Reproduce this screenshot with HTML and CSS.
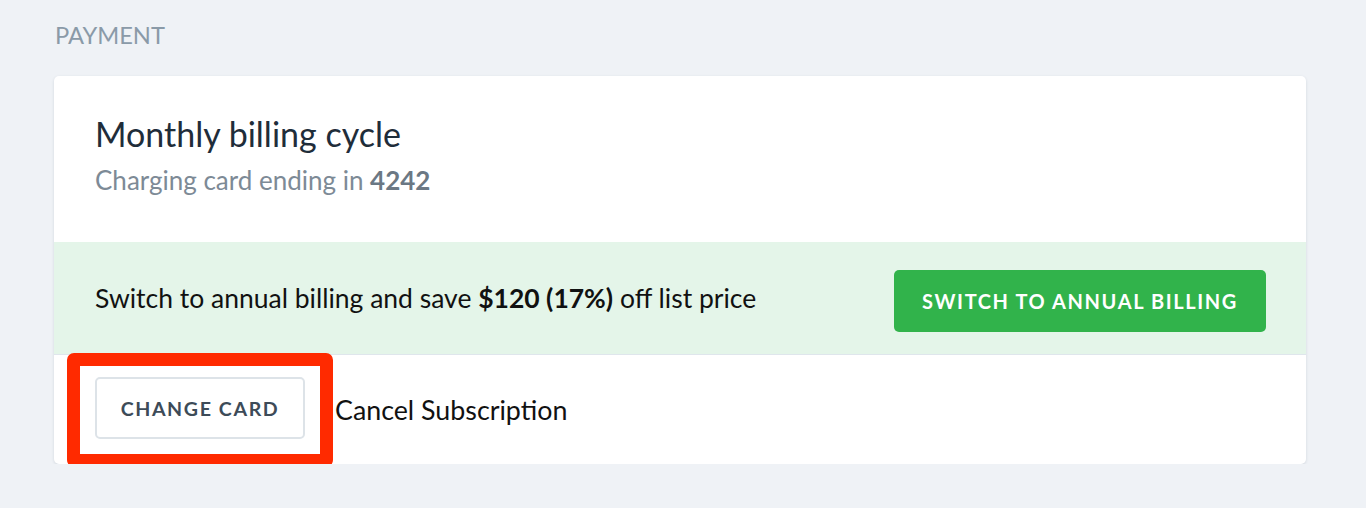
FILE: index.html
```html
<!DOCTYPE html>
<html>
<head>
<meta charset="utf-8">
<link rel="stylesheet" href="styles.css">
</head>
<body>
<div class="page">
  <h2 class="section-title">PAYMENT</h2>
  <div class="card">
    <div class="card-head">
      <div class="plan-title">Monthly billing cycle</div>
      <div class="plan-sub">Charging card ending in <b>4242</b></div>
    </div>
    <div class="upsell">
      <div class="upsell-text">Switch to annual billing and save <b>$120 (17%)</b> off list price</div>
      <button class="btn btn-green">SWITCH TO ANNUAL BILLING</button>
    </div>
    <div class="actions">
      <button class="btn btn-outline">CHANGE CARD</button>
      <span class="cancel">Cancel Subscription</span>
    </div>
    <div class="highlight"></div>
  </div>
</div>
</body>
</html>
```
FILE: styles.css
```css
* { box-sizing: border-box; }
body {
  margin: 0;
  background: #eff2f6;
  font-family: Lato, "Source Sans Pro", "Noto Sans", sans-serif;
}
.page {
  padding: 20px 60px 0 54px;
}
.section-title {
  margin: 0 0 0 1px;
  font-weight: 400;
  font-size: 23.7px;
  line-height: 30px;
  color: #8a9aa8;
}
.card {
  position: relative;
  margin-top: 26px;
  background: #fff;
  border-radius: 5px;
  box-shadow: 0 1px 3px rgba(40, 60, 80, 0.15);
}
.card-head {
  height: 166px;
  padding: 37px 41px 0;
}
.plan-title {
  font-size: 34px;
  line-height: 42px;
  color: #1f2d3a;
}
.plan-sub {
  margin-top: 9px;
  font-size: 26px;
  line-height: 32px;
  color: #7d8a96;
}
.plan-sub b { color: #6b7884; font-weight: 700; }
.upsell {
  height: 113px;
  display: flex;
  align-items: center;
  justify-content: space-between;
  padding: 0 40px 0 41px;
  background: #e4f5e9;
  border-bottom: 1px solid #dfe6ec;
}
.upsell-text {
  font-size: 26.5px;
  color: #111;
}
.upsell-text b { font-weight: 700; }
.btn {
  font-family: inherit;
  font-weight: 700;
  letter-spacing: 1.6px;
  border-radius: 5px;
  height: 62px;
  cursor: pointer;
}
.btn-green {
  width: 372px;
  margin-top: 6px;
  background: #31b34b;
  border: none;
  color: #fff;
  font-size: 20px;
}
.actions {
  height: 109px;
  display: flex;
  align-items: center;
  gap: 30px;
  padding: 0 41px;
}
.btn-outline {
  width: 210px;
  margin-bottom: 3px;
  background: #fff;
  border: 2px solid #dde3e8;
  color: #3d4b58;
  font-size: 19.6px;
}
.cancel {
  font-size: 26.8px;
  color: #111;
}
.highlight {
  position: absolute;
  left: 13px;
  top: 277px;
  width: 266px;
  height: 114px;
  border: 13px solid #ff2a00;
  border-radius: 7px;
  pointer-events: none;
}
```
